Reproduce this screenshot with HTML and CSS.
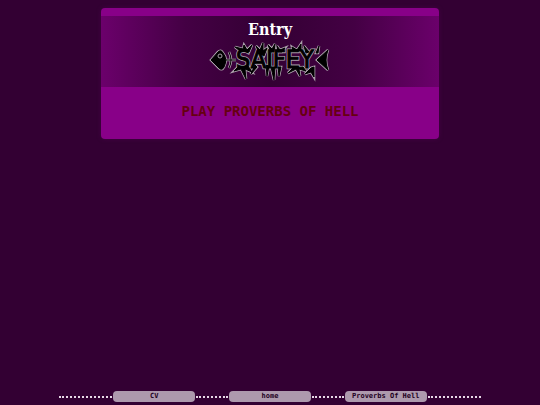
FILE: index.html
```
<!DOCTYPE html>
<html lang="en">
  <head>
    <meta charset="UTF-8" />
    <meta name="viewport" content="width=device-width, initial-scale=1.0" />
    <title>Saifey - Entry</title>
    <link rel="stylesheet" href="styles.css">
  </head>
  <body>
    <main class="card">
      <header class="card-header">
        <h1 class="card-title">Entry</h1>
        <svg class="logo" viewBox="0 0 122 42" role="img" aria-label="Saifey">
          <defs>
            <g id="bones">
              <path d="M2 20 L9 12 Q12 9 14 13 Q19 19 15 27 Q13 31 10 28 Z" />
              <path class="bone" d="M17 20 H27 M20 12 Q24 20 20 28" />
              <path d="M108 20 L119 10 Q115 20 119 30 Z" />
              <text class="logo-text" x="27" y="28">SAIFEY</text>
              <path class="spike" d="M31 11 L26 7 L34 9 L35 5 L38 10 L43 5 L40 12 Z M29 27 L25 31 L32 29 L37 39 L36 29 L43 32 L39 26 Z" />
              <path class="spike" d="M50 13 L47 6 L51 10 L54 3 L54 11 L58 8 L55 16 Z M46 25 L42 34 L48 27 Z M57 25 L58 36 L60 26 Z" />
              <path class="spike" d="M62 12 L59 5 L63 9 L66 4 L65 12 Z M62 27 L65 40 L66 27 Z M69 12 L68 6 L71 10 L76 8 L73 12 Z M69 27 L70 36 L72 27 Z" />
              <path class="spike" d="M84 11 L83 7 L88 10 L92 4 L92 11 Z M84 28 L79 33 L87 29 L91 36 L90 29 L97 31 L94 27 Z" />
              <path class="spike" d="M97 13 L95 6 L100 12 Z M107 13 L110 6 L109 13 Z M102 28 L96 34 L102 32 L105 37 L105 27 Z" />
            </g>
          </defs>
          <use class="logo-edge" href="#bones" />
          <use class="logo-fill" href="#bones" />
          <circle class="logo-eye" cx="11" cy="16" r="2" />
        </svg>
      </header>
      <div class="card-body">
        <a class="play-link" href="#play">PLAY PROVERBS OF HELL</a>
      </div>
    </main>
    <nav class="menu">
      <span class="menu-line menu-line-end"></span>
      <a class="menu-link" href="#cv">CV</a>
      <span class="menu-line"></span>
      <a class="menu-link" href="#home">home</a>
      <span class="menu-line"></span>
      <a class="menu-link" href="#proverbs">Proverbs Of Hell</a>
      <span class="menu-line menu-line-end"></span>
    </nav>
  </body>
</html>
```

FILE: styles.css
```
* {
  box-sizing: border-box;
}

body {
  display: flex;
  flex-direction: column;
  align-items: center;
  min-height: 100vh;
  margin: 0;
  padding: 8px 0 3px;
  background-color: #330033;
  font-family: "DejaVu Sans Mono", monospace;
}

a {
  text-decoration: none;
}

.card {
  width: 62.5%;
  padding: 8px 0;
  background-color: #880088;
  border-radius: 4px;
  box-shadow: 0 0 4px rgba(80, 0, 80, 0.6);
}

.card-header {
  display: flex;
  flex-direction: column;
  align-items: center;
  padding: 4px 0 5px;
  background: linear-gradient(to right, #6b006b, #440044 25%, #330033 50%, #440044 75%, #6b006b);
}

.card-title {
  margin: 0;
  color: #fff;
  font-family: "DejaVu Serif Condensed", "DejaVu Serif", serif;
  font-size: 16px;
  line-height: 20px;
}

.logo {
  width: 122px;
  height: 42px;
}

.logo-text {
  font-family: "DejaVu Sans Condensed", "Liberation Sans", sans-serif;
  font-size: 25px;
  text-rendering: geometricPrecision;
}

.bone {
  fill: none;
}

.logo-edge {
  fill: #aaa0aa;
  stroke: #aaa0aa;
  stroke-width: 2.6;
}

.logo-fill {
  fill: #000;
  stroke: #000;
  stroke-width: 1;
}

.logo-eye {
  fill: #000;
  stroke: #aaa0aa;
}

.card-body {
  padding: 12px 0 8px;
  text-align: center;
}

.play-link {
  color: #660011;
  font-size: 14px;
  font-weight: bold;
  line-height: 24px;
}

.menu {
  display: flex;
  align-items: center;
  gap: 1px;
  width: 78%;
  margin-top: auto;
}

.menu-line {
  flex: 3;
  border-top: 2px dotted #e6d8e6;
}

.menu-line-end {
  flex: 5;
}

.menu-link {
  width: 82px;
  background-color: #ad99ad;
  border-radius: 4px;
  color: #220022;
  font-size: 7px;
  font-weight: bold;
  line-height: 11px;
  text-align: center;
}
```
